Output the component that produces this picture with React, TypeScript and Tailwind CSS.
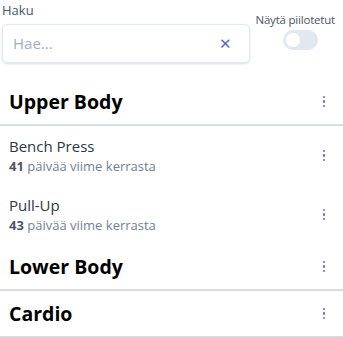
import { useState } from 'react';

interface Exercise {
  name: string;
  days: number;
}

interface Group {
  title: string;
  exercises: Exercise[];
}

const groups: Group[] = [
  {
    title: 'Upper Body',
    exercises: [
      { name: 'Bench Press', days: 41 },
      { name: 'Pull-Up', days: 43 },
    ],
  },
  { title: 'Lower Body', exercises: [] },
  { title: 'Cardio', exercises: [] },
];

function Kebab() {
  return (
    <button type="button" className="w-5 h-5 flex flex-col items-center justify-center gap-[2px]">
      <span className="w-[2.5px] h-[2.5px] rounded-full bg-[#6366f1]" />
      <span className="w-[2.5px] h-[2.5px] rounded-full bg-[#6366f1]" />
      <span className="w-[2.5px] h-[2.5px] rounded-full bg-[#6366f1]" />
    </button>
  );
}

export default function App() {
  const [query, setQuery] = useState('');
  const [showHidden, setShowHidden] = useState(false);

  return (
    <div className="w-[343px] h-[337px] bg-white overflow-hidden" style={{ fontFamily: '"Open Sans", "Noto Sans", sans-serif' }}>
      {/* Search + toggle */}
      <div className="flex items-start pl-[2px] pr-[8px]">
        <div className="w-[248px]">
          <label className="block text-[13px] leading-[16px] text-[#4a5568] mt-[2px] mb-[6px]">Haku</label>
          <div className="flex items-center h-[39px] border border-[#e2e8f0] rounded-[5px] shadow-sm pl-[10px] pr-[17px]">
            <input
              value={query}
              onChange={(e) => setQuery(e.target.value)}
              placeholder="Hae..."
              className="flex-1 min-w-0 outline-none text-[15px] text-[#2d3748] placeholder:text-[#a0aec0]"
            />
            <span className="text-[#5a67d8] text-[15px] leading-none">✕</span>
          </div>
        </div>
        <div className="flex-1 flex flex-col items-end pt-[13px]">
          <span className="text-[11.5px] leading-[14px] text-[#4a5568] tracking-[-0.2px]">Näytä piilotetut</span>
          <button
            type="button"
            onClick={() => setShowHidden(!showHidden)}
            className="mt-[3px] mr-[17px] w-[35px] h-[20px] rounded-full bg-[#e2e8f0] p-[3px] flex"
          >
            <span className="w-[14px] h-[14px] rounded-full bg-white" />
          </button>
        </div>
      </div>

      {/* Groups */}
      <div className="mt-[16px]">
        {groups.map((group) => (
          <div key={group.title}>
            <div className="flex items-center justify-between pl-[9px] pr-[9px] h-[47px] border-b-2 border-[#d5dde9]">
              <h2 className="text-[19.5px] font-bold text-black">{group.title}</h2>
              <Kebab />
            </div>
            {group.exercises.map((ex) => (
              <div key={ex.name} className="flex items-center justify-between h-[59px] pl-[9px] pr-[9px]">
                <div>
                  <div className="text-[15px] leading-[20px] text-[#2d3748]">{ex.name}</div>
                  <div className="text-[13px] leading-[20px] text-[#718096]">
                    <span className="font-bold text-[#4a5568]">{ex.days}</span> päivää viime kerrasta
                  </div>
                </div>
                <Kebab />
              </div>
            ))}
          </div>
        ))}
      </div>
    </div>
  );
}
